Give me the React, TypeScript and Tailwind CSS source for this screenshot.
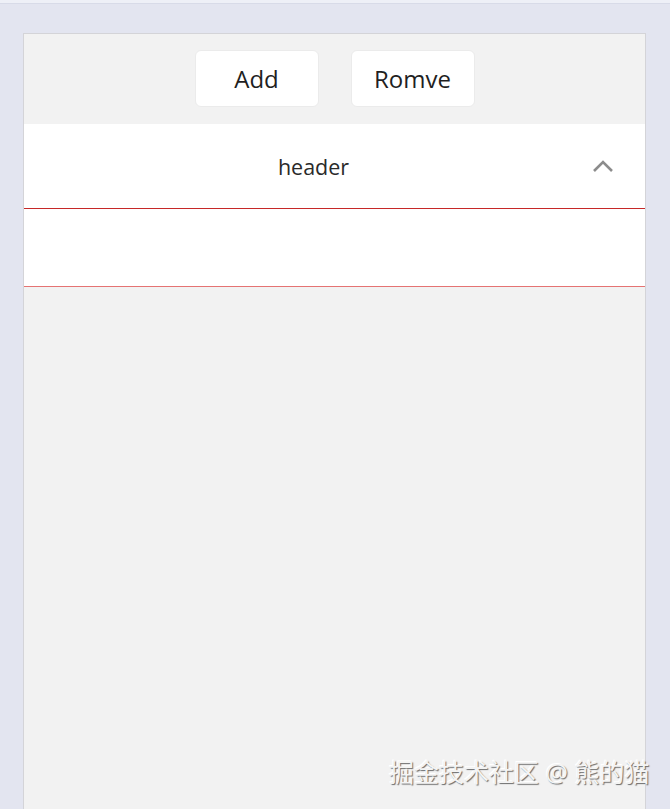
export default function App() {
  return (
    <div
      className="relative w-[670px] h-[809px] overflow-hidden bg-[#e3e5f0]"
      style={{ fontFamily: '"Open Sans", "Noto Sans", "Noto Sans CJK SC", sans-serif' }}
    >
      <div className="h-[4px] bg-[#eef0f7] border-b border-[#d8dbe8]" />
      <div className="pt-[29px] pl-[23px]">
        <div className="w-[623px] h-[780px] bg-[#f2f2f2] border border-b-0 border-[#d4d4d8] flex flex-col">
          <div className="flex justify-center gap-[32px] pt-[16px] pb-[17px]">
            <button className="w-[124px] h-[57px] bg-white rounded-[6px] border border-[#ebebeb] text-[24px] text-[#1f1f1f]">
              Add
            </button>
            <button className="w-[124px] h-[57px] bg-white rounded-[6px] border border-[#ebebeb] text-[24px] text-[#1f1f1f]">
              Romve
            </button>
          </div>
          <div className="h-[84px] bg-white flex items-center pl-[11px]">
            <div className="flex-1 text-center text-[21.5px] text-[#2a2a2a] pt-[3px]">header</div>
            <svg width="22" height="14" viewBox="0 0 22 14" className="mr-[31px]">
              <path d="M2 12 L11 3 L20 12" fill="none" stroke="#8c8c8c" strokeWidth="2.6" />
            </svg>
          </div>
          <div className="h-px bg-[#c62828]" />
          <div className="h-[77px] bg-white" />
          <div className="h-px bg-[#e57373]" />
        </div>
      </div>
      <div className="absolute left-[389px] top-[756px] text-[25px] leading-[32px] text-[#f4f4f4] [text-shadow:1px_1px_1px_#6b6b6b,-1px_-1px_0_#ffffff] whitespace-nowrap">
        掘金技术社区 @ 熊的猫
      </div>
    </div>
  );
}
